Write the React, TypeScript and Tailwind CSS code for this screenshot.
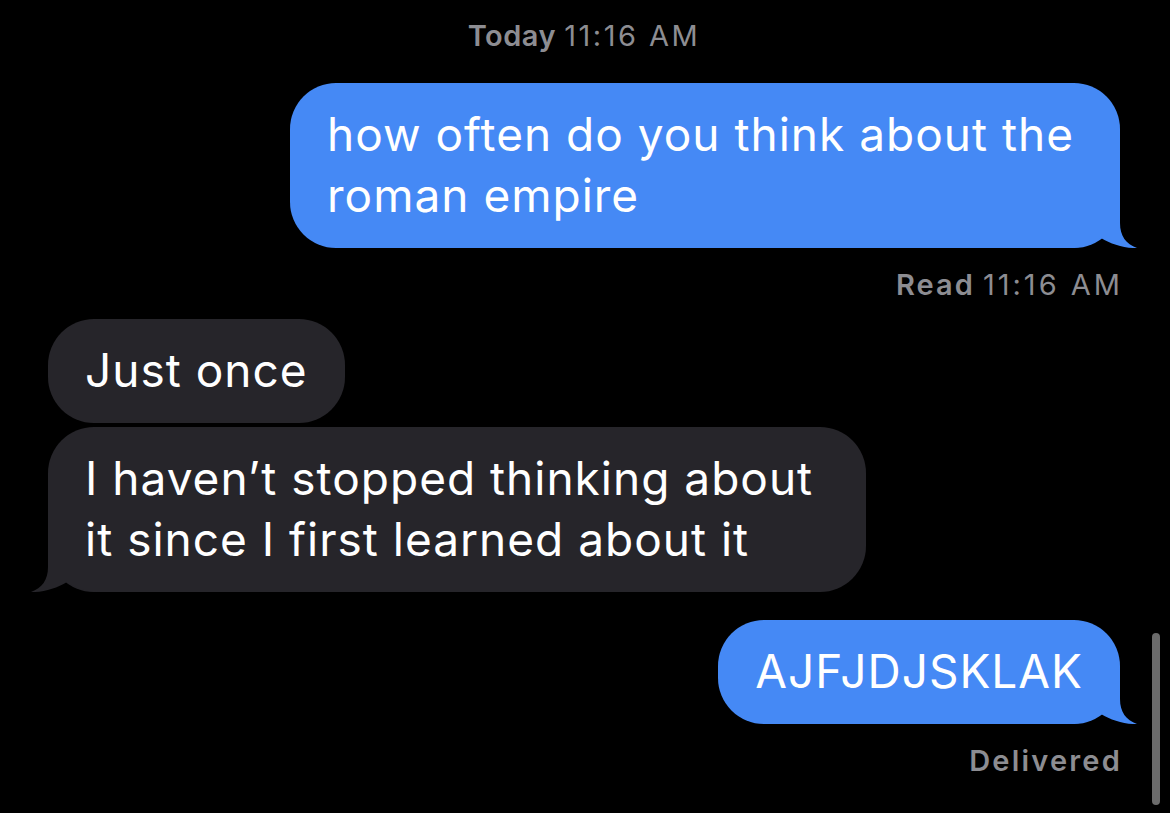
import type { ReactNode } from 'react';

const font = { fontFamily: 'Inter, "Noto Sans", sans-serif' };

function Tail({ color, side }: { color: string; side: 'left' | 'right' }) {
  // tail + a bit of the body corner, drawn over the bubble's bottom corner
  return (
    <svg
      width="80"
      height="48"
      viewBox="0 0 80 48"
      className={
        side === 'right'
          ? 'absolute bottom-0 right-[-17px]'
          : 'absolute bottom-0 left-[-17px] -scale-x-100'
      }
    >
      <path
        d="M0 0 H63 V23 C63 36 69 44 80 48 C67 48.5 54 44 44 38 C36 44 26 48 10 48 H0 Z"
        fill={color}
      />
    </svg>
  );
}

function Bubble({
  children,
  mine,
  tail,
  className = '',
}: {
  children: ReactNode;
  mine?: boolean;
  tail?: boolean;
  className?: string;
}) {
  const color = mine ? '#4589f5' : '#26252a';
  return (
    <div
      className={`relative rounded-[46px] px-[37px] pt-[21px] pb-[22px] text-[46px] leading-[61px] tracking-[1px] text-white ${className}`}
      style={{ backgroundColor: color }}
    >
      <span className="relative z-10">{children}</span>
      {tail && <Tail color={color} side={mine ? 'right' : 'left'} />}
    </div>
  );
}

export default function App() {
  return (
    <div className="relative h-[813px] w-[1170px] overflow-hidden bg-black" style={font}>
      <div className="flex flex-col pl-[48px] pr-[50px] pt-[18px]">
        {/* timestamp */}
        <div className="text-center text-[29px] leading-[36px] text-[#8d8d92]">
          <span className="font-semibold tracking-[0.5px]">Today</span>{' '}
          <span className="tracking-[2.5px]">11:16 AM</span>
        </div>

        <div className="mt-[29px] flex justify-end">
          <Bubble mine tail className="w-[830px]">
            how often do you think about the roman empire
          </Bubble>
        </div>

        <div className="mr-[-3px] mt-[19px] text-right text-[29px] leading-[36px] text-[#8d8d92]">
          <span className="font-semibold tracking-[2px]">Read</span>{' '}
          <span className="tracking-[3px]">11:16 AM</span>
        </div>

        <div className="mt-[16px] flex flex-col items-start gap-[4px]">
          <Bubble>Just once</Bubble>
          <Bubble tail className="w-[818px]">
            I haven’t stopped thinking about it since I first learned about it
          </Bubble>
        </div>

        <div className="mt-[28px] flex justify-end">
          <Bubble mine tail>
            AJFJDJSKLAK
          </Bubble>
        </div>

        <div className="mr-[-2px] mt-[19px] text-right text-[29px] font-semibold leading-[36px] tracking-[2.2px] text-[#8d8d92]">
          Delivered
        </div>
      </div>

      {/* scroll indicator */}
      <div className="absolute right-[10px] top-[633px] h-[172px] w-[8px] rounded-full bg-[#6b6b6b]" />
    </div>
  );
}
